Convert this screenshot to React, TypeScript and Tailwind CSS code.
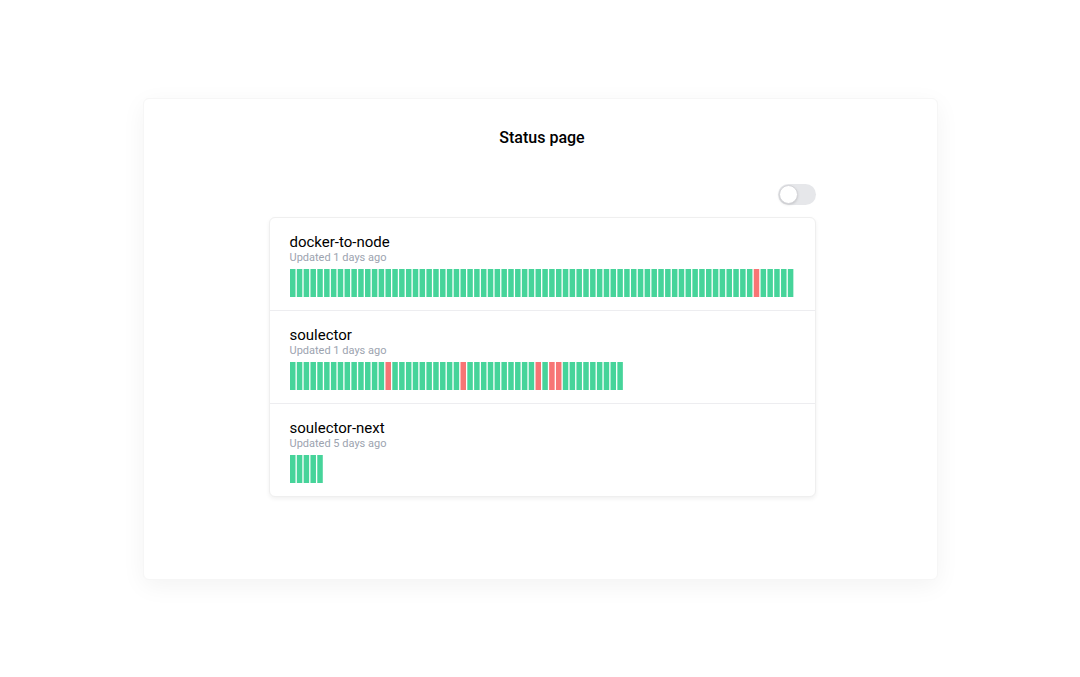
const GREEN = "#46d49a";
const RED = "#f77575";
const PITCH = 6.82;
const BAR_W = 5.5;

interface Monitor {
  name: string;
  updated: string;
  total: number;
  down: number[];
}

const monitors: Monitor[] = [
  { name: "docker-to-node", updated: "Updated 1 days ago", total: 74, down: [68] },
  { name: "soulector", updated: "Updated 1 days ago", total: 49, down: [14, 25, 36, 38, 39] },
  { name: "soulector-next", updated: "Updated 5 days ago", total: 5, down: [] },
];

// uptime strip, one rect per check
function Bars({ total, down }: { total: number; down: number[] }) {
  const width = total * PITCH;
  return (
    <svg className="mt-[5px] block" width={width} height={28} viewBox={`0 0 ${width} 28`}>
      {Array.from({ length: total }).map((_, i) => (
        <rect
          key={i}
          x={i * PITCH}
          y={0}
          width={BAR_W}
          height={28}
          fill={down.includes(i) ? RED : GREEN}
        />
      ))}
    </svg>
  );
}

function Toggle() {
  return (
    <button
      type="button"
      className="relative h-[21px] w-[38px] rounded-full bg-[#e6e7ea]"
      aria-label="toggle"
    >
      <span className="absolute left-[1px] top-[1px] h-[19px] w-[19px] rounded-full border border-[#d4d4d8] bg-white shadow-sm" />
    </button>
  );
}

export default function App() {
  return (
    <div className="min-h-screen bg-white pt-[98px] font-['Roboto',sans-serif]">
      <div className="mx-auto w-[795px] rounded-md border border-[#f6f6f6] bg-white pb-[82px] pt-[27px] shadow-[0_6px_24px_rgba(0,0,0,0.05)]">
        <h1 className="translate-x-[2px] text-center text-[16px] font-medium leading-6 text-black">Status page</h1>
        <div className="mx-auto mt-[34px] w-[547px] translate-x-[2px]">
          <div className="flex justify-end">
            <Toggle />
          </div>
          <div className="mt-[12px] overflow-hidden rounded-md border border-[#efefef] bg-white shadow-[0_2px_4px_rgba(0,0,0,0.06)]">
            {monitors.map((m, idx) => (
              <div
                key={m.name}
                className={`px-5 pb-[13px] pt-[14px] ${idx > 0 ? "border-t border-[#ededf0]" : ""}`}
              >
                <div className="text-[15px] leading-5 text-black">{m.name}</div>
                <div className="text-[11px] leading-3 text-[#9ca3af]">{m.updated}</div>
                <Bars total={m.total} down={m.down} />
              </div>
            ))}
          </div>
        </div>
      </div>
    </div>
  );
}
